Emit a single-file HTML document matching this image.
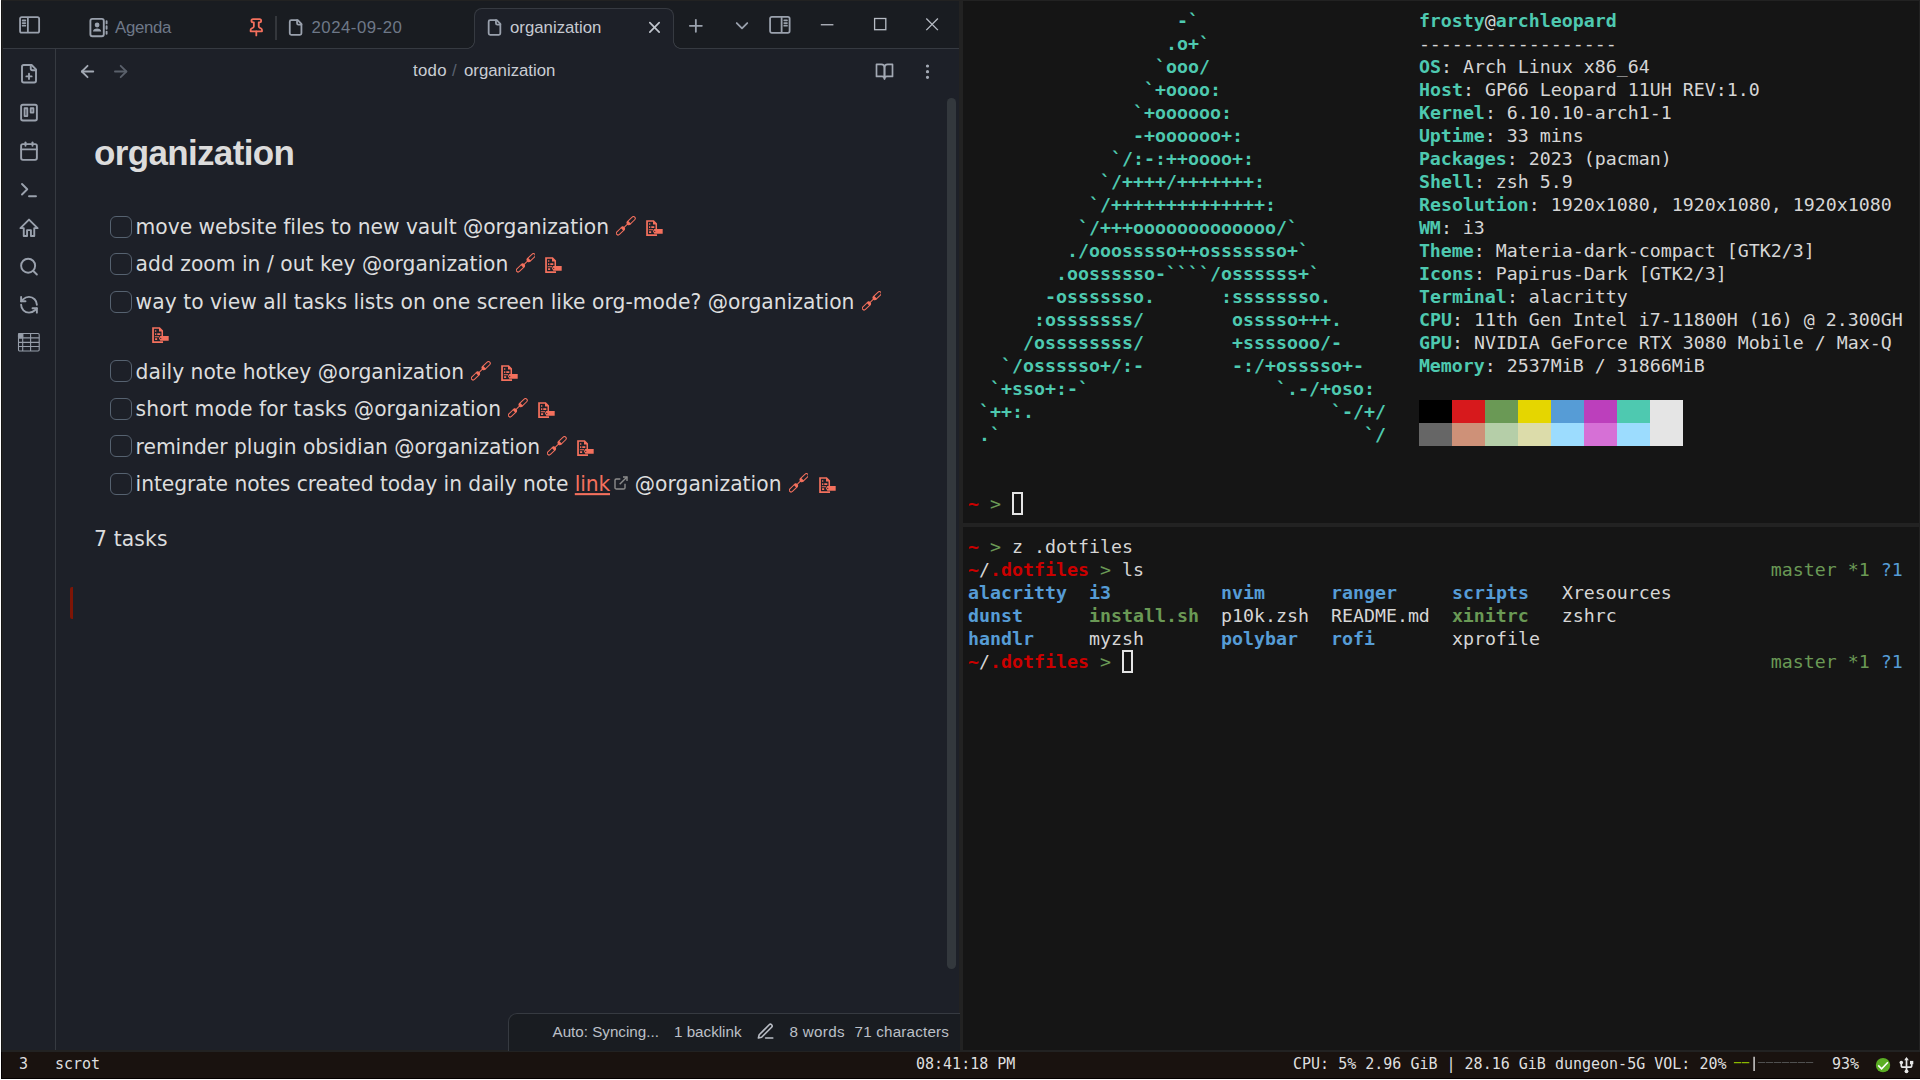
<!DOCTYPE html>
<html lang="en">
<head>
<meta charset="utf-8">
<title>organization - Obsidian</title>
<style>
*{box-sizing:border-box;margin:0;padding:0}
html,body{width:1920px;height:1080px;overflow:hidden;background:#222222}
body{position:relative;font-family:"Liberation Sans",sans-serif;color:#dadada}
.abs{position:absolute}
#wl{left:0;top:0;width:1px;height:1080px;background:#fff}
#wb{left:0;top:1079px;width:1920px;height:1px;background:#fff}
#obs{left:0;top:0;width:959px;height:1050px;background:#1d2028}
#obl{left:1px;top:0;width:2px;height:1052px;background:linear-gradient(90deg,#151515 0,#151515 1px,#222 1px,#222 2px)}
#obt{left:0;top:0;width:959px;height:1px;background:#222}
#titlebar{left:0;top:1px;width:959px;height:47px;background:#191c21}
#tb-line{left:3px;top:48px;width:956px;height:1px;background:#363a41}
#ribbon-line{left:55px;top:49px;width:1px;height:1001px;background:#363a41}
svg.ic{position:absolute;fill:none;stroke:#9aa1ad;stroke-linecap:round;stroke-linejoin:round;overflow:visible}
.tabtxt{position:absolute;font-size:16.8px;line-height:20px;color:#6e7888;white-space:pre}
#acttab{left:474px;top:8px;width:200px;height:41px;background:#1d2028;border:1px solid #363a41;border-bottom:none;border-radius:8px 8px 0 0}
.tcorner{top:41px;width:8px;height:8px;background:radial-gradient(circle at 0 0,rgba(0,0,0,0) 6.6px,#363a41 7.1px,#363a41 7.6px,#1d2028 8.1px)}
.tcorner.r{background:radial-gradient(circle at 100% 0,rgba(0,0,0,0) 6.6px,#363a41 7.1px,#363a41 7.6px,#1d2028 8.1px)}
.crumb{position:absolute;top:61px;font-size:16.8px;line-height:20px;color:#c9cdd4;white-space:pre}
#title{left:94px;top:133px;font-weight:bold;font-size:35px;line-height:40px;letter-spacing:-0.66px;color:#dcdcdc;white-space:pre}
.task{position:absolute;left:135.6px;font-family:"DejaVu Sans",sans-serif;font-size:20.28px;line-height:28px;color:#dcddde;white-space:pre}
.cb{position:absolute;left:110px;width:22px;height:22px;border:1px solid #566270;border-radius:6px}
.tx,.lnk{display:inline-block;transform:scaleY(1.045);transform-origin:0 21px}
svg.em{display:inline-block;vertical-align:-3px}
.lk svg{vertical-align:-1.6px}
.dc svg{vertical-align:-2.2px}
.lnk{color:#f4705d;letter-spacing:-0.16px;text-decoration:underline;text-decoration-thickness:2px;text-underline-offset:2px}
svg.ext{display:inline-block;width:16px;height:16px;margin-left:2.8px;margin-right:-0.6px;vertical-align:0.3px;fill:none;stroke:#8c8c8c;stroke-width:2.1;stroke-linecap:butt;stroke-linejoin:miter}
#status{left:508px;top:1013px;width:452px;height:38px;background:#191c21;border-top:1px solid #363a41;border-left:1px solid #363a41;border-radius:9px 0 0 0}
.st{position:absolute;top:1022px;font-size:15.2px;line-height:20px;color:#bcc0c8;white-space:pre}
#scroll{left:947px;top:98px;width:9px;height:871px;background:#33383d;border-radius:5px}
.term{position:absolute;background:#151515;overflow:hidden}
pre.t{position:absolute;left:5px;top:8px;font-family:"DejaVu Sans Mono",monospace;font-size:18.27px;line-height:23px;color:#d6d6d6;white-space:pre}
pre.t b{font-weight:bold}
.c6{color:#4ec9b0}.c1{color:#cb0000}.c2{color:#6a9955}.c4{color:#569cd6}
.cur{display:inline-block;width:11px;height:23px;border:2px solid #e4e4e4;vertical-align:top}
#bar{left:1px;top:1052px;width:1919px;height:27px;background:#19120f;border-left:1px solid #050000;border-bottom:1px solid #050000}
#barb{display:none}
.bt{position:absolute;top:1054px;font-family:"DejaVu Sans Mono",monospace;font-size:15px;line-height:20px;color:#dfdfdf;white-space:pre}
</style>
</head>
<body>
<div id="obs" class="abs">
<div id="titlebar" class="abs"></div>
<div id="tb-line" class="abs"></div>
<div id="ribbon-line" class="abs"></div>
<div id="acttab" class="abs"></div>
<div class="abs tcorner" style="left:467px"></div>
<div class="abs tcorner r" style="left:673px"></div>
<div id="title" class="abs">organization</div>
<div id="scroll" class="abs"></div>
<div id="status" class="abs"></div>
<svg class="ic" style="left:18px;top:13px;width:25px;height:25px;stroke:#9aa1ad" viewBox="0 0 25 25"><g transform="translate(1.200 1.450) scale(0.8667)" stroke-width="2.077"><path d="M21 3H3C1.9 3 1 3.9 1 5V19C1 20.1 1.9 21 3 21H21C22.1 21 23 20.1 23 19V5C23 3.9 22.1 3 21 3Z"/><path d="M10 4V20"/><path d="M4 7H7"/><path d="M4 10H7"/><path d="M4 13H7"/></g></svg>
<svg class="ic" style="left:88px;top:16px;width:22px;height:23px;stroke-width:1.9" viewBox="0 0 22 23"><rect x="2.4" y="2.9" width="13.4" height="17.4" rx="2"/><path d="M18.6 5.2v2.2M18.6 10.2v2.6M18.6 15.6v2.2"/><circle cx="9.1" cy="9" r="2.4" fill="#9aa1ad" stroke="none"/><path d="M5 15.6c0-2 1.8-3.2 4.1-3.2s4.1 1.2 4.1 3.2z" fill="#9aa1ad" stroke="none"/></svg>
<div class="tabtxt" style="left:115px;top:18px;letter-spacing:-0.3px">Agenda</div>
<svg class="ic" style="left:245px;top:16px;width:24px;height:24px;stroke:#f4705d" viewBox="0 0 24 24"><g transform="translate(1.550 1.550) scale(0.8125)" stroke-width="2.215"><line x1="12" x2="12" y1="17" y2="22"/><path d="M5 17h14v-1.76a2 2 0 0 0-1.11-1.79l-1.78-.9A2 2 0 0 1 15 10.76V6h1a2 2 0 0 0 0-4H8a2 2 0 0 0 0 4h1v4.76a2 2 0 0 1-1.11 1.79l-1.78.9A2 2 0 0 0 5 15.24Z"/></g></svg>
<div class="abs" style="left:275px;top:16px;width:2px;height:24px;background:#34373c"></div>
<svg class="ic" style="left:285px;top:17px;width:22px;height:22px;stroke:#9aa1ad" viewBox="0 0 22 22"><g transform="translate(1.850 1.750) scale(0.7292)" stroke-width="2.469"><path d="M15 2H6a2 2 0 0 0-2 2v16a2 2 0 0 0 2 2h12a2 2 0 0 0 2-2V7Z"/><path d="M14 2v4a2 2 0 0 0 2 2h4"/></g></svg>
<div class="tabtxt" style="left:311.5px;top:18px;letter-spacing:0.5px">2024-09-20</div>
<svg class="ic" style="left:484px;top:17px;width:22px;height:22px;stroke:#9aa1ad" viewBox="0 0 22 22"><g transform="translate(1.750 1.750) scale(0.7292)" stroke-width="2.469"><path d="M15 2H6a2 2 0 0 0-2 2v16a2 2 0 0 0 2 2h12a2 2 0 0 0 2-2V7Z"/><path d="M14 2v4a2 2 0 0 0 2 2h4"/></g></svg>
<div class="tabtxt" style="left:510px;top:18px;color:#c6cad2">organization</div>
<svg class="ic" style="left:644px;top:17px;width:23px;height:23px;stroke:#c0c5cd" viewBox="0 0 23 23"><g transform="translate(1.150 1.050) scale(0.7792)" stroke-width="2.182"><path d="M18 6 6 18"/><path d="m6 6 12 12"/></g></svg>
<svg class="ic" style="left:684px;top:14px;width:25px;height:25px;stroke:#9aa1ad" viewBox="0 0 25 25"><g transform="translate(1.550 1.550) scale(0.8583)" stroke-width="2.097"><path d="M5 12h14"/><path d="M12 5v14"/></g></svg>
<svg class="ic" style="left:730px;top:14px;width:25px;height:25px;stroke:#9aa1ad" viewBox="0 0 25 25"><g transform="translate(1.500 1.150) scale(0.8750)" stroke-width="2.057"><path d="m6 9 6 6 6-6"/></g></svg>
<svg class="ic" style="left:768px;top:13px;width:26px;height:26px;stroke:#9aa1ad" viewBox="0 0 26 26"><g transform="translate(1.200 1.150) scale(0.8875)" stroke-width="2.028"><path d="M3 3H21C22.1 3 23 3.9 23 5V19C23 20.1 22.1 21 21 21H3C1.9 21 1 20.1 1 19V5C1 3.9 1.9 3 3 3Z"/><path d="M14 4V20"/><path d="M20 7H17"/><path d="M20 10H17"/><path d="M20 13H17"/></g></svg>
<svg class="ic" style="left:815px;top:12px;width:130px;height:26px;stroke:#b7bcc5;stroke-width:1.3;stroke-linecap:butt;stroke-linejoin:miter" viewBox="0 0 130 26"><path d="M5.8 12.75h12.6"/><rect x="59.6" y="6.5" width="11.2" height="11.2"/><path d="M111.3 6.5l11.6 11.6M122.9 6.5l-11.6 11.6"/></svg>
<svg class="ic" style="left:17px;top:62px;width:25px;height:25px;stroke:#9aa1ad" viewBox="0 0 25 25"><g transform="translate(1.500 1.250) scale(0.8750)" stroke-width="2.171"><path d="M15 2H6a2 2 0 0 0-2 2v16a2 2 0 0 0 2 2h12a2 2 0 0 0 2-2V7Z"/><path d="M14 2v4a2 2 0 0 0 2 2h4"/><path d="M9 15h6"/><path d="M12 18v-6"/></g></svg>
<svg class="ic" style="left:17px;top:101px;width:25px;height:25px;stroke:#9aa1ad" viewBox="0 0 25 25"><g transform="translate(1.500 1.100) scale(0.8750)" stroke-width="2.171"><rect width="18" height="18" x="3" y="3" rx="2"/><rect width="3" height="9" x="7" y="7"/><rect width="3" height="5" x="14" y="7"/></g></svg>
<svg class="ic" style="left:17px;top:139px;width:25px;height:25px;stroke:#9aa1ad" viewBox="0 0 25 25"><g transform="translate(1.500 1.600) scale(0.8750)" stroke-width="2.171"><rect width="18" height="18" x="3" y="4" rx="2"/><path d="M16 2v4"/><path d="M8 2v4"/><path d="M3 10h18"/></g></svg>
<svg class="ic" style="left:17px;top:178px;width:25px;height:25px;stroke:#9aa1ad" viewBox="0 0 25 25"><g transform="translate(1.500 1.600) scale(0.8750)" stroke-width="2.171"><polyline points="4 17 10 11 4 5"/><line x1="12" x2="20" y1="19" y2="19"/></g></svg>
<svg class="ic" style="left:17px;top:216px;width:25px;height:25px;stroke:#9aa1ad" viewBox="0 0 25 25"><g transform="translate(1.500 1.300) scale(0.8750)" stroke-width="2.171"><path d="M12 2.6 L2.2 12.4 H6 V21.3 H9.8 V14.6 H14.2 V21.3 H18 V12.4 H21.8 Z"/></g></svg>
<svg class="ic" style="left:17px;top:255px;width:25px;height:25px;stroke:#9aa1ad" viewBox="0 0 25 25"><g transform="translate(1.500 1.100) scale(0.8750)" stroke-width="2.171"><circle cx="11" cy="11" r="8"/><path d="m21 21-4.3-4.3"/></g></svg>
<svg class="ic" style="left:17px;top:293px;width:25px;height:25px;stroke:#9aa1ad" viewBox="0 0 25 25"><g transform="translate(1.500 1.300) scale(0.8750)" stroke-width="2.171"><path d="M21 12a9 9 0 0 0-9-9 9.75 9.75 0 0 0-6.74 2.74L3 8"/><path d="M3 3v5h5"/><path d="M3 12a9 9 0 0 0 9 9 9.75 9.75 0 0 0 6.74-2.74L21 16"/><path d="M16 16h5v5"/></g></svg>
<svg class="ic" style="left:18px;top:333px;width:22px;height:19px;stroke:#969dA9;stroke-width:1.1;stroke-linecap:butt" viewBox="0 0 22 19"><rect x="0.500" y="0.550" width="20.700" height="17.400" rx="1.200"/><path d="M0.500 4.900h20.700M0.500 9.400h20.700M0.500 13.500h20.700M4.700 0.600v17.400M12.600 0.600v17.400"/><rect x="0.500" y="0.550" width="4.200" height="4.350" rx="0.800" fill="#969da9"/></svg>
<svg class="ic" style="left:76px;top:60px;width:24px;height:24px;stroke:#a3a9b4" viewBox="0 0 24 24"><g transform="translate(1.750 1.700) scale(0.8167)" stroke-width="2.204"><path d="m12 19-7-7 7-7"/><path d="M19 12H5"/></g></svg>
<svg class="ic" style="left:109px;top:60px;width:24px;height:24px;stroke:#5a606b" viewBox="0 0 24 24"><g transform="translate(1.850 1.700) scale(0.8167)" stroke-width="2.204"><path d="M5 12h14"/><path d="m12 5 7 7-7 7"/></g></svg>
<div class="crumb" style="left:413px;letter-spacing:0.3px">todo</div>
<div class="crumb" style="left:452px;color:#5a6270">/</div>
<div class="crumb" style="left:464px">organization</div>
<svg class="ic" style="left:873px;top:61px;width:24px;height:24px;stroke:#a3a9b4" viewBox="0 0 24 24"><g transform="translate(1.900 1.050) scale(0.8000)" stroke-width="2.125"><path d="M2 3h6a4 4 0 0 1 4 4v14a3 3 0 0 0-3-3H2z"/><path d="M22 3h-6a4 4 0 0 0-4 4v14a3 3 0 0 1 3-3h7z"/></g></svg>
<svg class="ic" style="left:916px;top:60px;width:24px;height:24px;stroke:#a3a9b4" viewBox="0 0 24 24"><g transform="translate(1.800 1.950) scale(0.8083)" stroke-width="1.979"><circle cx="12" cy="12" r="1"/><circle cx="12" cy="5" r="1"/><circle cx="12" cy="19" r="1"/></g></svg>
<div class="cb" style="top:216px"></div>
<div class="task" style="top:213px"><span class="tx" style="letter-spacing:-0.026px">move website files to new vault @organization</span> <span class="lk"><svg class="em" style="width:19.6px;height:19.6px;margin:0 0.7px" viewBox="0 0 21 21"><g transform="rotate(-44 10.5 10.5)" fill="none" stroke="#f4705d" stroke-width="1.1"><rect x="-2.8" y="8.55" width="10.6" height="3.9" rx="1.95"/><rect x="13.2" y="8.55" width="10.6" height="3.9" rx="1.95"/><path d="M8.4 10.5h4.2" stroke-width="1.1"/></g><g transform="rotate(-44 10.5 10.5)" fill="#f4705d"><path d="M5 8.2h1.6l2.2 2.3-2.2 2.3H5zM16 8.2h-1.600l-2.2 2.3 2.2 2.3H16z"/></g></svg></span> <span class="dc"><svg class="em" style="width:20.2px;height:16.35px;margin-right:0.8px" viewBox="-3 0 21 17"><path d="M0.300.2h8l3.300 3.400v5.700h-1.600V4.600H7.400V1.800H2.100v13h9.500v1.800H0.300z" fill="#f4705d"/><path d="M3.300 3.400h1.300v1.500H3.300zM3.300 6.400h1.300v1.800H3.300zM5.600 6.400h3.200v1.800H5.600zM3 9.600h4.600v1H3zM3.300 11.600h2.200v1.900H3.300z" fill="#f4705d"/><path d="M8.800 9.300h8.700v4.900H8.800l-1.500-2.450z" fill="#f4705d"/><circle cx="9.200" cy="11.750" r="0.650" fill="#1d2028"/></svg></span></div>
<div class="cb" style="top:253px"></div>
<div class="task" style="top:250px"><span class="tx" style="letter-spacing:0.016px">add zoom in / out key @organization</span> <span class="lk"><svg class="em" style="width:19.6px;height:19.6px;margin:0 0.7px" viewBox="0 0 21 21"><g transform="rotate(-44 10.5 10.5)" fill="none" stroke="#f4705d" stroke-width="1.1"><rect x="-2.8" y="8.55" width="10.6" height="3.9" rx="1.95"/><rect x="13.2" y="8.55" width="10.6" height="3.9" rx="1.95"/><path d="M8.4 10.5h4.2" stroke-width="1.1"/></g><g transform="rotate(-44 10.5 10.5)" fill="#f4705d"><path d="M5 8.2h1.6l2.2 2.3-2.2 2.3H5zM16 8.2h-1.600l-2.2 2.3 2.2 2.3H16z"/></g></svg></span> <span class="dc"><svg class="em" style="width:20.2px;height:16.35px;margin-right:0.8px" viewBox="-3 0 21 17"><path d="M0.300.2h8l3.300 3.400v5.700h-1.600V4.600H7.400V1.800H2.100v13h9.500v1.800H0.300z" fill="#f4705d"/><path d="M3.300 3.400h1.300v1.500H3.300zM3.300 6.400h1.300v1.800H3.300zM5.600 6.400h3.200v1.800H5.600zM3 9.600h4.600v1H3zM3.300 11.600h2.200v1.900H3.300z" fill="#f4705d"/><path d="M8.800 9.300h8.700v4.900H8.800l-1.500-2.450z" fill="#f4705d"/><circle cx="9.200" cy="11.750" r="0.650" fill="#1d2028"/></svg></span></div>
<div class="cb" style="top:291px"></div>
<div class="task" style="top:288px"><span class="tx" style="letter-spacing:0.038px">way to view all tasks lists on one screen like org-mode? @organization</span> <span class="lk"><svg class="em" style="width:19.6px;height:19.6px;margin:0 0.7px" viewBox="0 0 21 21"><g transform="rotate(-44 10.5 10.5)" fill="none" stroke="#f4705d" stroke-width="1.1"><rect x="-2.8" y="8.55" width="10.6" height="3.9" rx="1.95"/><rect x="13.2" y="8.55" width="10.6" height="3.9" rx="1.95"/><path d="M8.4 10.5h4.2" stroke-width="1.1"/></g><g transform="rotate(-44 10.5 10.5)" fill="#f4705d"><path d="M5 8.2h1.6l2.2 2.3-2.2 2.3H5zM16 8.2h-1.600l-2.2 2.3 2.2 2.3H16z"/></g></svg></span></div>
<div class="task" style="top:320px;left:149px"><span class="dc"><svg class="em" style="width:20.2px;height:16.35px;margin-right:0.8px" viewBox="-3 0 21 17"><path d="M0.300.2h8l3.300 3.400v5.700h-1.600V4.600H7.400V1.800H2.100v13h9.500v1.800H0.300z" fill="#f4705d"/><path d="M3.300 3.400h1.300v1.500H3.300zM3.300 6.400h1.300v1.800H3.300zM5.600 6.400h3.200v1.800H5.600zM3 9.600h4.600v1H3zM3.300 11.600h2.200v1.900H3.300z" fill="#f4705d"/><path d="M8.800 9.300h8.700v4.900H8.800l-1.500-2.450z" fill="#f4705d"/><circle cx="9.200" cy="11.750" r="0.650" fill="#1d2028"/></svg></span></div>
<div class="cb" style="top:360px"></div>
<div class="task" style="top:358px"><span class="tx" style="letter-spacing:0.000px">daily note hotkey @organization</span> <span class="lk"><svg class="em" style="width:19.6px;height:19.6px;margin:0 0.7px" viewBox="0 0 21 21"><g transform="rotate(-44 10.5 10.5)" fill="none" stroke="#f4705d" stroke-width="1.1"><rect x="-2.8" y="8.55" width="10.6" height="3.9" rx="1.95"/><rect x="13.2" y="8.55" width="10.6" height="3.9" rx="1.95"/><path d="M8.4 10.5h4.2" stroke-width="1.1"/></g><g transform="rotate(-44 10.5 10.5)" fill="#f4705d"><path d="M5 8.2h1.6l2.2 2.3-2.2 2.3H5zM16 8.2h-1.600l-2.2 2.3 2.2 2.3H16z"/></g></svg></span> <span class="dc"><svg class="em" style="width:20.2px;height:16.35px;margin-right:0.8px" viewBox="-3 0 21 17"><path d="M0.300.2h8l3.300 3.400v5.700h-1.600V4.600H7.400V1.800H2.100v13h9.500v1.800H0.300z" fill="#f4705d"/><path d="M3.300 3.400h1.300v1.500H3.300zM3.300 6.400h1.300v1.800H3.300zM5.600 6.400h3.200v1.800H5.600zM3 9.600h4.600v1H3zM3.300 11.600h2.200v1.900H3.300z" fill="#f4705d"/><path d="M8.800 9.300h8.700v4.900H8.800l-1.500-2.450z" fill="#f4705d"/><circle cx="9.200" cy="11.750" r="0.650" fill="#1d2028"/></svg></span></div>
<div class="cb" style="top:398px"></div>
<div class="task" style="top:395px"><span class="tx" style="letter-spacing:0.085px">short mode for tasks @organization</span> <span class="lk"><svg class="em" style="width:19.6px;height:19.6px;margin:0 0.7px" viewBox="0 0 21 21"><g transform="rotate(-44 10.5 10.5)" fill="none" stroke="#f4705d" stroke-width="1.1"><rect x="-2.8" y="8.55" width="10.6" height="3.9" rx="1.95"/><rect x="13.2" y="8.55" width="10.6" height="3.9" rx="1.95"/><path d="M8.4 10.5h4.2" stroke-width="1.1"/></g><g transform="rotate(-44 10.5 10.5)" fill="#f4705d"><path d="M5 8.2h1.6l2.2 2.3-2.2 2.3H5zM16 8.2h-1.600l-2.2 2.3 2.2 2.3H16z"/></g></svg></span> <span class="dc"><svg class="em" style="width:20.2px;height:16.35px;margin-right:0.8px" viewBox="-3 0 21 17"><path d="M0.300.2h8l3.300 3.400v5.700h-1.600V4.600H7.400V1.800H2.100v13h9.500v1.800H0.300z" fill="#f4705d"/><path d="M3.300 3.400h1.300v1.500H3.300zM3.300 6.400h1.300v1.800H3.300zM5.600 6.400h3.200v1.800H5.600zM3 9.600h4.600v1H3zM3.300 11.600h2.200v1.900H3.300z" fill="#f4705d"/><path d="M8.800 9.300h8.700v4.900H8.800l-1.500-2.450z" fill="#f4705d"/><circle cx="9.200" cy="11.750" r="0.650" fill="#1d2028"/></svg></span></div>
<div class="cb" style="top:435px"></div>
<div class="task" style="top:433px"><span class="tx" style="letter-spacing:-0.031px">reminder plugin obsidian @organization</span> <span class="lk"><svg class="em" style="width:19.6px;height:19.6px;margin:0 0.7px" viewBox="0 0 21 21"><g transform="rotate(-44 10.5 10.5)" fill="none" stroke="#f4705d" stroke-width="1.1"><rect x="-2.8" y="8.55" width="10.6" height="3.9" rx="1.95"/><rect x="13.2" y="8.55" width="10.6" height="3.9" rx="1.95"/><path d="M8.4 10.5h4.2" stroke-width="1.1"/></g><g transform="rotate(-44 10.5 10.5)" fill="#f4705d"><path d="M5 8.2h1.6l2.2 2.3-2.2 2.3H5zM16 8.2h-1.600l-2.2 2.3 2.2 2.3H16z"/></g></svg></span> <span class="dc"><svg class="em" style="width:20.2px;height:16.35px;margin-right:0.8px" viewBox="-3 0 21 17"><path d="M0.300.2h8l3.300 3.400v5.700h-1.600V4.600H7.400V1.800H2.100v13h9.500v1.800H0.300z" fill="#f4705d"/><path d="M3.300 3.400h1.300v1.500H3.300zM3.300 6.400h1.300v1.800H3.300zM5.600 6.400h3.200v1.800H5.600zM3 9.600h4.600v1H3zM3.300 11.600h2.200v1.900H3.300z" fill="#f4705d"/><path d="M8.800 9.300h8.700v4.900H8.800l-1.500-2.450z" fill="#f4705d"/><circle cx="9.200" cy="11.750" r="0.650" fill="#1d2028"/></svg></span></div>
<div class="cb" style="top:473px"></div>
<div class="task" style="top:470px"><span class="tx" style="letter-spacing:-0.057px">integrate notes created today in daily note </span><span class="lnk">link</span><svg class="ext" viewBox="0 0 24 24"><path d="M18 13v6a2 2 0 0 1-2 2H5a2 2 0 0 1-2-2V8a2 2 0 0 1 2-2h6"/><polyline points="15 3 21 3 21 9"/><line x1="10" x2="21" y1="14" y2="3"/></svg><span class="tx" style="letter-spacing:0.05px"> @organization</span> <span class="lk"><svg class="em" style="width:19.6px;height:19.6px;margin:0 0.7px" viewBox="0 0 21 21"><g transform="rotate(-44 10.5 10.5)" fill="none" stroke="#f4705d" stroke-width="1.1"><rect x="-2.8" y="8.55" width="10.6" height="3.9" rx="1.95"/><rect x="13.2" y="8.55" width="10.6" height="3.9" rx="1.95"/><path d="M8.4 10.5h4.2" stroke-width="1.1"/></g><g transform="rotate(-44 10.5 10.5)" fill="#f4705d"><path d="M5 8.2h1.6l2.2 2.3-2.2 2.3H5zM16 8.2h-1.600l-2.2 2.3 2.2 2.3H16z"/></g></svg></span> <span class="dc"><svg class="em" style="width:20.2px;height:16.35px;margin-right:0.8px" viewBox="-3 0 21 17"><path d="M0.300.2h8l3.300 3.400v5.700h-1.600V4.600H7.400V1.800H2.100v13h9.500v1.800H0.300z" fill="#f4705d"/><path d="M3.300 3.400h1.300v1.500H3.300zM3.300 6.400h1.300v1.800H3.300zM5.600 6.400h3.200v1.800H5.600zM3 9.600h4.600v1H3zM3.300 11.600h2.200v1.900H3.300z" fill="#f4705d"/><path d="M8.800 9.300h8.700v4.900H8.800l-1.500-2.450z" fill="#f4705d"/><circle cx="9.200" cy="11.750" r="0.650" fill="#1d2028"/></svg></span></div>
<div class="task" style="left:94px;top:525px"><span class="tx" style="letter-spacing:0.15px">7 tasks</span></div>
<div class="abs" style="left:70px;top:587px;width:3px;height:32px;background:#7e1506;border-radius:2px 0 0 2px"></div>
<div class="st" style="left:552.5px">Auto: Syncing...</div>
<div class="st" style="left:674px">1 backlink</div>
<svg class="ic" style="left:755px;top:1020px;width:24px;height:24px;stroke:#b9bdc5" viewBox="0 0 24 24"><g transform="translate(1.000 2.000) scale(0.8000)" stroke-width="2.000"><path d="M12 20h9"/><path d="M16.5 3.5a2.12 2.12 0 0 1 3 3L7 19l-4 1 1-4Z"/></g></svg>
<div class="st" style="left:789.5px;letter-spacing:0.3px">8 words</div>
<div class="st" style="left:854.5px;letter-spacing:0.2px">71 characters</div>
<div id="obl" class="abs"></div>
<div id="obt" class="abs"></div>
</div>
<div class="term" style="left:963px;top:1px;width:956px;height:522px"><pre class="t"><b class="c6">                   -`</b>                    <b class="c6">frosty</b>@<b class="c6">archleopard</b>
<b class="c6">                  .o+`</b>                   ------------------
<b class="c6">                 `ooo/</b>                   <b class="c6">OS</b>: Arch Linux x86_64
<b class="c6">                `+oooo:</b>                  <b class="c6">Host</b>: GP66 Leopard 11UH REV:1.0
<b class="c6">               `+oooooo:</b>                 <b class="c6">Kernel</b>: 6.10.10-arch1-1
<b class="c6">               -+oooooo+:</b>                <b class="c6">Uptime</b>: 33 mins
<b class="c6">             `/:-:++oooo+:</b>               <b class="c6">Packages</b>: 2023 (pacman)
<b class="c6">            `/++++/+++++++:</b>              <b class="c6">Shell</b>: zsh 5.9
<b class="c6">           `/++++++++++++++:</b>             <b class="c6">Resolution</b>: 1920x1080, 1920x1080, 1920x1080
<b class="c6">          `/+++ooooooooooooo/`</b>           <b class="c6">WM</b>: i3
<b class="c6">         ./ooosssso++osssssso+`</b>          <b class="c6">Theme</b>: Materia-dark-compact [GTK2/3]
<b class="c6">        .oossssso-````/ossssss+`</b>         <b class="c6">Icons</b>: Papirus-Dark [GTK2/3]
<b class="c6">       -osssssso.      :ssssssso.</b>        <b class="c6">Terminal</b>: alacritty
<b class="c6">      :osssssss/        osssso+++.</b>       <b class="c6">CPU</b>: 11th Gen Intel i7-11800H (16) @ 2.300GH
<b class="c6">     /ossssssss/        +ssssooo/-</b>       <b class="c6">GPU</b>: NVIDIA GeForce RTX 3080 Mobile / Max-Q
<b class="c6">   `/ossssso+/:-        -:/+osssso+-</b>     <b class="c6">Memory</b>: 2537MiB / 31866MiB
<b class="c6">  `+sso+:-`                 `.-/+oso:</b>
<b class="c6"> `++:.                           `-/+/</b>
<b class="c6"> .`                                 `/</b>


<b class="c1">~</b> <span class="c2">&gt;</span> <span class="cur"></span></pre><div class="abs" style="left:456px;top:399px;width:33px;height:23px;background:#000000"></div><div class="abs" style="left:489px;top:399px;width:33px;height:23px;background:#d7191c"></div><div class="abs" style="left:522px;top:399px;width:33px;height:23px;background:#6a9955"></div><div class="abs" style="left:555px;top:399px;width:33px;height:23px;background:#e5d600"></div><div class="abs" style="left:588px;top:399px;width:33px;height:23px;background:#569cd6"></div><div class="abs" style="left:621px;top:399px;width:33px;height:23px;background:#bc3fbc"></div><div class="abs" style="left:654px;top:399px;width:33px;height:23px;background:#4ec9b0"></div><div class="abs" style="left:687px;top:399px;width:33px;height:23px;background:#e5e5e5"></div><div class="abs" style="left:456px;top:422px;width:33px;height:23px;background:#666666"></div><div class="abs" style="left:489px;top:422px;width:33px;height:23px;background:#ce9178"></div><div class="abs" style="left:522px;top:422px;width:33px;height:23px;background:#b5cea8"></div><div class="abs" style="left:555px;top:422px;width:33px;height:23px;background:#dcdcaa"></div><div class="abs" style="left:588px;top:422px;width:33px;height:23px;background:#9cdcfe"></div><div class="abs" style="left:621px;top:422px;width:33px;height:23px;background:#d670d6"></div><div class="abs" style="left:654px;top:422px;width:33px;height:23px;background:#9cdcfe"></div><div class="abs" style="left:687px;top:422px;width:33px;height:23px;background:#e5e5e5"></div></div>
<div class="term" style="left:963px;top:527px;width:956px;height:523px"><pre class="t"><b class="c1">~</b> <span class="c2">&gt;</span> z .dotfiles
<b class="c1">~</b>/<b class="c1">.dotfiles</b> <span class="c2">&gt;</span> ls                                                         <span class="c2">master *1</span> <span class="c4">?1</span>
<b class="c4">alacritty</b>  <b class="c4">i3</b>          <b class="c4">nvim</b>      <b class="c4">ranger</b>     <b class="c4">scripts</b>   Xresources
<b class="c4">dunst</b>      <b class="c2">install.sh</b>  p10k.zsh  README.md  <b class="c2">xinitrc</b>   zshrc
<b class="c4">handlr</b>     myzsh       <b class="c4">polybar</b>   <b class="c4">rofi</b>       xprofile
<b class="c1">~</b>/<b class="c1">.dotfiles</b> <span class="c2">&gt;</span> <span class="cur"></span>                                                          <span class="c2">master *1</span> <span class="c4">?1</span></pre></div>
<div id="bar" class="abs"></div>
<div id="barb" class="abs"></div>
<div class="bt" style="left:19px">3</div>
<div class="bt" style="left:55px">scrot</div>
<div class="bt" style="left:916px">08:41:18 PM</div>
<div class="bt" style="left:1293px">CPU: 5% 2.96 GiB | 28.16 GiB dungeon-5G VOL: 20%</div>
<svg class="abs" style="left:1733px;top:1052px;width:84px;height:26px" viewBox="0 0 84 26"><path d="M0.9 10.55h7.400M8.900 10.55h7.400" stroke="#8bb800" stroke-width="1.3"/><path d="M21.1 4.800v14.3" stroke="#dcdcdc" stroke-width="1.4"/><path d="M24.9 10.550h7.300M32.9 10.550h7.300M40.9 10.550h7.300M48.9 10.550h7.300M56.9 10.550h7.300M64.9 10.550h7.300M72.9 10.550h7.300" stroke="#505050" stroke-width="1.100"/></svg>
<div class="bt" style="left:1832px">93%</div>
<svg class="abs" style="left:1875px;top:1057px;width:16px;height:16px" viewBox="0 0 16 16"><circle cx="8" cy="8.1" r="7.2" fill="#5aae24"/><path d="M3.200 8.400l3.400 3.400 6.300-6.600" fill="none" stroke="#fff" stroke-width="1.6"/></svg>
<svg class="abs" style="left:1898px;top:1055px;width:16px;height:20px" viewBox="-0.5 -1.5 16 20"><g fill="none" stroke="#e6e6e6" stroke-width="1.7"><path d="M8 2v12"/><path d="M2.800 6.200v2.700q0 1.800 1.800 1.800h6.800q1.800 0 1.800-1.800V6.200"/></g><path d="M8 0.500l2.300 3.300H5.700z" fill="#e6e6e6"/><circle cx="8" cy="14.800" r="1.900" fill="#e6e6e6"/><circle cx="2.800" cy="6.100" r="1.800" fill="#e6e6e6"/><rect x="11.500" y="4.400" width="3.300" height="3.300" fill="#e6e6e6"/></svg>
<div id="wl" class="abs"></div>
<div id="wb" class="abs"></div>
</body>
</html>
